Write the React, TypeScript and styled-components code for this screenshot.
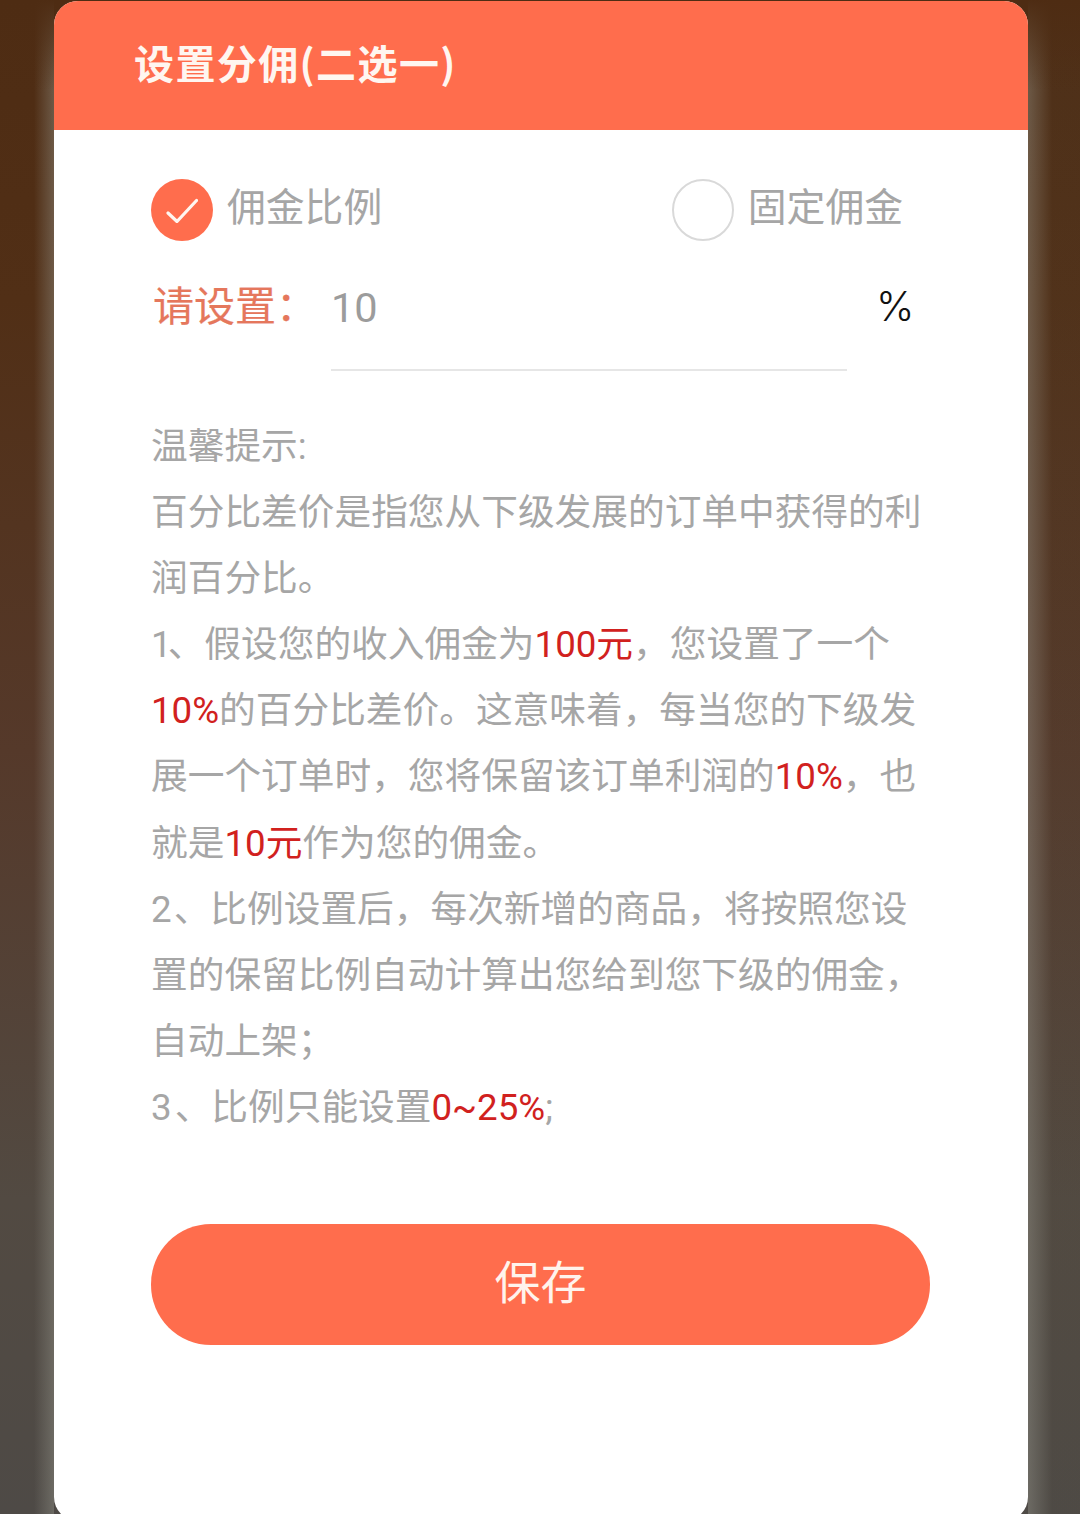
import React from "react";
import styled, { createGlobalStyle } from "styled-components";

const Global = createGlobalStyle`
  html, body { margin: 0; padding: 0; height: 1514px; overflow: hidden; }
  body { font-family: "Noto Sans CJK SC", "Noto Sans", sans-serif; }
`;

const Backdrop = styled.div`
  width: 1080px;
  height: 1514px;
  overflow: hidden;
  box-sizing: border-box;
  padding: 1px 52px 0 54px;
  background:
    linear-gradient(180deg, #4e2c13 0, rgba(78,44,19,0) 90px),
    linear-gradient(90deg, rgba(0,0,0,0) 0, rgba(0,0,0,0) 34px, rgba(150,150,140,.42) 54px, rgba(0,0,0,0) 54px, rgba(0,0,0,0) 1028px, rgba(150,150,140,.42) 1028px, rgba(80,75,60,.12) 1052px, rgba(80,75,60,.12) 1080px),
    linear-gradient(180deg, #4e2c13 0, #512f16 300px, #55392a 750px, #524a42 1200px, #4e4a46 1514px);
`;

const Card = styled.main`
  width: 974px;
  height: 1520px;
  background: #fff;
  border-radius: 24px;
  overflow: hidden;
`;

const Header = styled.header`
  height: 129px;
  background: #ff6d4d;
  display: flex;
  align-items: flex-start;
  padding: 36px 0 0 80px;
  box-sizing: border-box;
`;

const Title = styled.h1`
  margin: 0;
  font-size: 40px;
  line-height: 50px;
  font-weight: 700;
  letter-spacing: 1.4px;
  color: #fff6f0;
`;

const Body = styled.div`
  padding: 49px 97px 0 97px;
`;

const Options = styled.div`
  display: flex;
  justify-content: space-between;
  padding-right: 28px;
`;

const Option = styled.label`
  display: flex;
  align-items: center;
  gap: 14px;
  height: 62px;
  font-size: 38.8px;
  color: #a6a6a6;
`;

const OptionText = styled.span`
  margin-bottom: 12px;
`;

const Radio = styled.span<{ $on?: boolean }>`
  width: 62px;
  height: 62px;
  border-radius: 50%;
  box-sizing: border-box;
  display: flex;
  align-items: center;
  justify-content: center;
  background: ${(p) => (p.$on ? "#ff6d4d" : "#fff")};
  border: ${(p) => (p.$on ? "none" : "2px solid #d9d9d9")};
`;

const Field = styled.div`
  display: flex;
  align-items: flex-start;
  margin-top: 37px;
  height: 93px;
  margin-left: 2px;
`;

const FieldLabel = styled.span`
  width: 178px;
  font-size: 41px;
  line-height: 50px;
  color: #e5775c;
  font-weight: 400;
  -webkit-text-stroke: 0.2px #e5775c;
`;

const ValueBox = styled.div`
  width: 516px;
  height: 93px;
  box-sizing: border-box;
  border-bottom: 2px solid #e6e6e6;
  font-family: Roboto, sans-serif;
  font-size: 41.5px;
  line-height: 60px;
  color: #9c9c9c;
`;

const Unit = styled.span`
  margin-left: 29px;
  font-family: Inter, Roboto, sans-serif;
  font-size: 41px;
  font-weight: 300;
  line-height: 56px;
  color: #111;
`;

const Notes = styled.div`
  margin-top: 43px;
  width: 775px;
  font-family: Roboto, "Noto Sans CJK SC", sans-serif;
  font-size: 36.7px;
  line-height: 66.1px;
  color: #a6a6a6;
`;

const NoteLine = styled.div`
  white-space: nowrap;
`;

const Numeral = styled.span<{ $shift: number }>`
  letter-spacing: ${(p) => p.$shift}px;
`;

const Red = styled.span`
  color: #d1211e;
`;

const Save = styled.button`
  display: block;
  width: 779px;
  height: 121px;
  margin-top: 83px;
  border: none;
  border-radius: 60px;
  background: #ff6d4d;
  color: #fff3ec;
  font-family: inherit;
  font-size: 46px;
  line-height: 50px;
  padding: 0 0 11px;
`;

const Check = () => (
  <svg width="32" height="25" viewBox="0 0 32 25" fill="none">
    <path d="M2 15 L11 23.5 L30.5 2.5" stroke="#fff6f0" strokeWidth="3.2" strokeLinecap="round" strokeLinejoin="round" />
  </svg>
);

export default function App() {
  return (
    <Backdrop>
      <Global />
      <Card>
        <Header>
          <Title>设置分佣(二选一)</Title>
        </Header>
        <Body>
          <Options>
            <Option>
              <Radio $on>
                <Check />
              </Radio>
              <OptionText>佣金比例</OptionText>
            </Option>
            <Option>
              <Radio />
              <OptionText>固定佣金</OptionText>
            </Option>
          </Options>
          <Field>
            <FieldLabel>请设置：</FieldLabel>
            <ValueBox>10</ValueBox>
            <Unit>%</Unit>
          </Field>
          <Notes>
            <NoteLine>温馨提示:</NoteLine>
            <NoteLine>百分比差价是指您从下级发展的订单中获得的利</NoteLine>
            <NoteLine>润百分比。</NoteLine>
            <NoteLine>
              <Numeral $shift={-4}>1</Numeral>、假设您的收入佣金为<Red>100元</Red>，您设置了一个
            </NoteLine>
            <NoteLine>
              <Red>10%</Red>的百分比差价。这意味着，每当您的下级发
            </NoteLine>
            <NoteLine>
              展一个订单时，您将保留该订单利润的<Red>10%</Red>，也
            </NoteLine>
            <NoteLine>
              就是<Red>10元</Red>作为您的佣金。
            </NoteLine>
            <NoteLine>
              <Numeral $shift={2}>2</Numeral>、比例设置后，每次新增的商品，将按照您设
            </NoteLine>
            <NoteLine>置的保留比例自动计算出您给到您下级的佣金，</NoteLine>
            <NoteLine>自动上架；</NoteLine>
            <NoteLine>
              <Numeral $shift={3}>3</Numeral>、比例只能设置<Red>0~25%</Red>;
            </NoteLine>
          </Notes>
          <Save>保存</Save>
        </Body>
      </Card>
    </Backdrop>
  );
}
